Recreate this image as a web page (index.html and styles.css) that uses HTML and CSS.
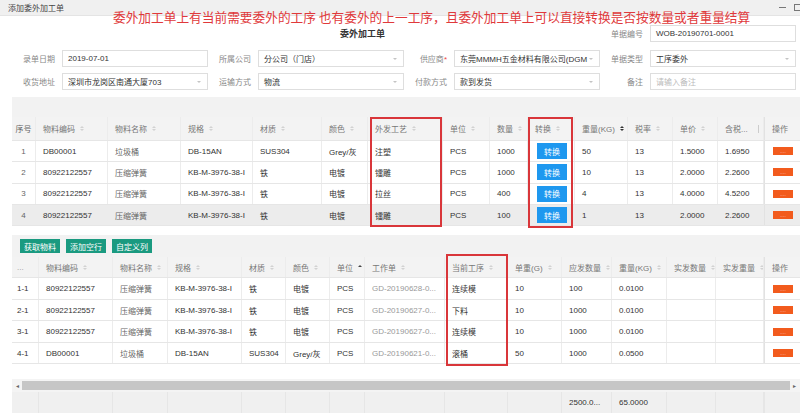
FILE: index.html
```html
<!DOCTYPE html>
<html lang="zh-CN">
<head>
<meta charset="utf-8">
<title>添加委外加工单</title>
<link rel="stylesheet" href="styles.css">
</head>
<body>
<div class="titlebar">
  <span class="wtitle">添加委外加工单</span>
  <span class="wctrls"><span class="wmin"></span><span class="wmax"></span></span>
</div>
<div class="note">委外加工单上有当前需要委外的工序 也有委外的上一工序，且委外加工单上可以直接转换是否按数量或者重量结算</div>

<div class="page">
  <div class="head-row">
    <div class="doc-title">委外加工单</div>
    <div class="field"><label>单据编号</label><div class="input">WOB-20190701-0001</div></div>
  </div>
  <div class="form">
    <div class="field"><label>录单日期</label><div class="input">2019-07-01</div></div>
    <div class="field"><label>所属公司</label><div class="input sel">分公司（门店）</div></div>
    <div class="field"><label>供应商<em>*</em></label><div class="input sel">东莞MMMH五金材料有限公司(DGM</div></div>
    <div class="field"><label>单据类型</label><div class="input sel">工序委外</div></div>
    <div class="field"><label>收货地址</label><div class="input sel">深圳市龙岗区南通大厦703</div></div>
    <div class="field"><label>运输方式</label><div class="input sel">物流</div></div>
    <div class="field"><label>付款方式</label><div class="input sel">款到发货</div></div>
    <div class="field"><label>备注</label><div class="input ph">请输入备注</div></div>
  </div>

  <div class="sec1">
    <div class="toolbar"></div>
    <div class="grid g1">
      <div class="row hd">
        <div class="c ctr">序号</div>
        <div class="c">物料编码<i class="s"></i></div>
        <div class="c">物料名称<i class="s"></i></div>
        <div class="c">规格<i class="s"></i></div>
        <div class="c">材质<i class="s"></i></div>
        <div class="c">颜色<i class="s"></i></div>
        <div class="c">外发工艺<i class="s"></i></div>
        <div class="c">单位<i class="s"></i></div>
        <div class="c">数量<i class="s"></i></div>
        <div class="c">转换<i class="s"></i></div>
        <div class="c">重量(KG)<i class="s desc"></i></div>
        <div class="c">税率<i class="s"></i></div>
        <div class="c">单价<i class="s"></i></div>
        <div class="c">含税...<span class="rz"></span></div>
        <div class="c">操作</div>
      </div>
      <div class="row">
        <div class="c ctr">1</div><div class="c">DB00001</div><div class="c lt">垃圾桶</div><div class="c">DB-15AN</div><div class="c">SUS304</div><div class="c">Grey/灰</div><div class="c">注塑</div><div class="c">PCS</div><div class="c">1000</div><div class="c"><span class="btn-blue">转换</span></div><div class="c">50</div><div class="c">13</div><div class="c">1.5000</div><div class="c">1.6950</div><div class="c"><span class="btn-or">....</span></div>
      </div>
      <div class="row">
        <div class="c ctr">2</div><div class="c">80922122557</div><div class="c lt">压缩弹簧</div><div class="c">KB-M-3976-38-I</div><div class="c">铁</div><div class="c">电镀</div><div class="c">镭雕</div><div class="c">PCS</div><div class="c">1000</div><div class="c"><span class="btn-blue">转换</span></div><div class="c">10</div><div class="c">13</div><div class="c">2.0000</div><div class="c">2.2600</div><div class="c"><span class="btn-or">....</span></div>
      </div>
      <div class="row">
        <div class="c ctr">3</div><div class="c">80922122557</div><div class="c lt">压缩弹簧</div><div class="c">KB-M-3976-38-I</div><div class="c">铁</div><div class="c">电镀</div><div class="c">拉丝</div><div class="c">PCS</div><div class="c">400</div><div class="c"><span class="btn-blue">转换</span></div><div class="c">4</div><div class="c">13</div><div class="c">4.0000</div><div class="c">4.5200</div><div class="c"><span class="btn-or">....</span></div>
      </div>
      <div class="row hl">
        <div class="c ctr">4</div><div class="c">80922122557</div><div class="c lt">压缩弹簧</div><div class="c">KB-M-3976-38-I</div><div class="c">铁</div><div class="c">电镀</div><div class="c">镭雕</div><div class="c">PCS</div><div class="c">100</div><div class="c"><span class="btn-blue">转换</span></div><div class="c">1</div><div class="c">13</div><div class="c">2.0000</div><div class="c">2.2600</div><div class="c"><span class="btn-or">....</span></div>
      </div>
    </div>
  </div>

  <div class="sec2">
    <div class="toolbar2">
      <span class="btn-g">获取物料</span><span class="btn-g">添加空行</span><span class="btn-g">自定义列</span>
    </div>
    <div class="grid g2">
      <div class="row hd">
        <div class="c mut">...</div>
        <div class="c">物料编码<i class="s"></i></div>
        <div class="c">物料名称<i class="s"></i></div>
        <div class="c">规格<i class="s"></i></div>
        <div class="c">材质<i class="s"></i></div>
        <div class="c">颜色<i class="s"></i></div>
        <div class="c">单位<i class="s asc"></i></div>
        <div class="c">工作单<i class="s"></i></div>
        <div class="c">当前工序<i class="s"></i></div>
        <div class="c">单重(G)<i class="s"></i></div>
        <div class="c">应发数量<i class="s"></i></div>
        <div class="c">重量(KG)<i class="s"></i></div>
        <div class="c">实发数量<i class="s"></i></div>
        <div class="c">实发重量<i class="s"></i></div>
        <div class="c">操作</div>
      </div>
      <div class="row">
        <div class="c">1-1</div><div class="c">80922122557</div><div class="c lt">压缩弹簧</div><div class="c">KB-M-3976-38-I</div><div class="c">铁</div><div class="c">电镀</div><div class="c">PCS</div><div class="c mut">GD-20190628-0...</div><div class="c">连续模</div><div class="c">10</div><div class="c">100</div><div class="c">0.0100</div><div class="c"></div><div class="c"></div><div class="c"><span class="btn-or">....</span></div>
      </div>
      <div class="row">
        <div class="c">2-1</div><div class="c">80922122557</div><div class="c lt">压缩弹簧</div><div class="c">KB-M-3976-38-I</div><div class="c">铁</div><div class="c">电镀</div><div class="c">PCS</div><div class="c mut">GD-20190627-0...</div><div class="c">下料</div><div class="c">10</div><div class="c">1000</div><div class="c">0.0100</div><div class="c"></div><div class="c"></div><div class="c"><span class="btn-or">....</span></div>
      </div>
      <div class="row">
        <div class="c">3-1</div><div class="c">80922122557</div><div class="c lt">压缩弹簧</div><div class="c">KB-M-3976-38-I</div><div class="c">铁</div><div class="c">电镀</div><div class="c">PCS</div><div class="c mut">GD-20190627-0...</div><div class="c">连续模</div><div class="c">10</div><div class="c">1000</div><div class="c">0.0100</div><div class="c"></div><div class="c"></div><div class="c"><span class="btn-or">....</span></div>
      </div>
      <div class="row">
        <div class="c">4-1</div><div class="c">DB00001</div><div class="c lt">垃圾桶</div><div class="c">DB-15AN</div><div class="c">SUS304</div><div class="c">Grey/灰</div><div class="c">PCS</div><div class="c mut">GD-20190621-0...</div><div class="c">滚桶</div><div class="c">50</div><div class="c">1000</div><div class="c">0.0500</div><div class="c"></div><div class="c"></div><div class="c"><span class="btn-or">....</span></div>
      </div>
      <div class="empty"></div>
      <div class="scrollbar"><span class="sa">◂</span><span class="thumb"></span><span class="sa">▸</span></div>
      <div class="row ft">
        <div class="c"></div><div class="c"></div><div class="c"></div><div class="c"></div><div class="c"></div><div class="c"></div><div class="c"></div><div class="c"></div><div class="c"></div><div class="c"></div><div class="c">2500.0...</div><div class="c">65.0000</div><div class="c"></div><div class="c"></div><div class="c"></div>
      </div>
    </div>
  </div>

  <div class="mark m1"></div>
  <div class="mark m2"></div>
  <div class="mark m3"></div>
</div>
</body>
</html>
```

FILE: styles.css
```css
* { box-sizing: border-box; }
body {
  margin: 0;
  width: 800px;
  height: 414px;
  overflow: hidden;
  position: relative;
  background: #fff;
  color: #333;
  font-family: "Liberation Sans", "Noto Sans CJK SC", sans-serif;
  font-size: 8px;
}
.titlebar {
  height: 16px;
  background: #f0f0f0;
  border-bottom: 1px solid #e4e4e4;
  display: flex;
  align-items: center;
  justify-content: space-between;
  padding-left: 8px;
}
.wtitle { color: #444; font-size: 8px; }
.wctrls { display: flex; align-items: center; gap: 8px; }
.wmin { width: 7px; height: 1px; background: #777; }
.wmax { width: 6px; height: 7px; border: 1px solid #777; border-right: 0; }

.note {
  position: absolute;
  left: 113px;
  top: 8px;
  font-family: "Noto Sans CJK SC", sans-serif;
  font-size: 12.7px;
  line-height: 18px;
  color: #e0393b;
  white-space: nowrap;
}

.page { padding-left: 12px; }

.head-row {
  margin-top: 9px;
  display: grid;
  grid-template-columns: 588px 196px;
  height: 17px;
  align-items: center;
}
.doc-title { padding-left: 328px; font-size: 9px; font-weight: bold; color: #333; }

.form {
  margin-top: 8px;
  display: grid;
  grid-template-columns: repeat(4, 196px);
  row-gap: 6px;
}
.field {
  display: grid;
  grid-template-columns: 43px 146px;
  column-gap: 7px;
  align-items: center;
  height: 17px;
}
.field label { text-align: right; color: #888; white-space: nowrap; }
.field label em { font-style: normal; color: #e44; }
.input {
  height: 17px;
  border: 1px solid #dedede;
  background: #fff;
  padding: 0 14px 0 5px;
  display: flex;
  align-items: center;
  white-space: nowrap;
  overflow: hidden;
  color: #333;
  position: relative;
}
.input.sel::after {
  content: "";
  position: absolute;
  right: 6px;
  top: 7px;
  border-left: 2px solid transparent;
  border-right: 2px solid transparent;
  border-top: 2px solid #c4c4c4;
}
.input.ph { color: #bbb; }

.sec1 { margin-top: 7px; background: #fff; padding-bottom: 9px; }
.toolbar { height: 20px; background: #f2f2f2; }

.grid { width: 788px; }
.row {
  display: grid;
  height: 21.33px;
  border-bottom: 1px solid #e6e6e6;
  background: #fff;
}
.g1 .row { grid-template-columns: 24px 72px 73px 72px 69px 46px 75px 47px 38px 47px 53px 45px 45px 46px 36px; }
.g2 .row { grid-template-columns: 27px 74px 55px 74px 44px 44px 35px 80px 63px 54px 50px 55px 49px 48px 36px; }
.g2 .row { height: 21.5px; }
.row.hd { height: 24px; background: #f3f3f3; color: #777; }
.g2 .row.hd { height: 21px; }
.row.hl { background: #ececec; }
.c {
  display: flex;
  align-items: center;
  padding-left: 7px;
  border-right: 1px solid #ececec;
  white-space: nowrap;
  overflow: hidden;
}
.c:last-child { border-right: 0; border-left: 1px solid #e2e2e2; }
.c.ctr { justify-content: center; padding-left: 0; color: #666; }
.g2 .row > .c:first-child { padding-left: 5px; }
.c.lt { color: #666; }
.c.mut { color: #999; }

.s {
  display: inline-flex;
  flex-direction: column;
  gap: 1px;
  margin-left: 5px;
}
.s::before, .s::after {
  content: "";
  border-left: 2px solid transparent;
  border-right: 2px solid transparent;
}
.s::before { border-bottom: 2px solid #d2d2d2; }
.s::after { border-top: 2px solid #d2d2d2; }
.s.desc::after { border-top-color: #333; }
.s.desc::before { border-bottom-color: #333; }
.s.asc::before { border-bottom-color: #444; }
.s.asc::after { border-top-color: transparent; }
.rz { margin-left: 10px; width: 1px; height: 8px; background: #ccc; }

.btn-blue {
  margin-left: 2px;
  width: 30px;
  height: 16px;
  background: #1e98ef;
  color: #fff;
  display: flex;
  align-items: center;
  justify-content: center;
}
.btn-or {
  margin-left: 1px;
  width: 20px;
  height: 8px;
  background: #f25b1d;
  color: #fcc;
  font-size: 5px;
  line-height: 8px;
  text-align: center;
  overflow: hidden;
}

.sec2 { background: #f2f2f2; }
.toolbar2 {
  height: 22px;
  display: flex;
  align-items: flex-start;
  gap: 6px;
  padding: 4px 0 0 8px;
}
.btn-g {
  height: 14px;
  padding: 0 4px;
  background: #1a9a80;
  color: #fff;
  display: flex;
  align-items: center;
}
.empty { height: 15px; background: #fff; }
.scrollbar {
  height: 13px;
  background: #f4f4f4;
  display: flex;
  align-items: center;
  gap: 3px;
  padding: 0 4px 0 4px;
  color: #666;
  font-size: 6px;
}
.thumb { flex: 1; height: 9px; background: #c6c6c6; }
.g2 .row.ft { height: 21px; background: #f0f0f0; border-bottom: 0; }
.row.ft .c { border-right-color: #e6e6e6; }
.row.ft .c:last-child { border-left-color: #e6e6e6; }

.mark {
  position: absolute;
  border: 2px solid #d9363a;
}
.m1 { left: 370px; top: 117px; width: 72px; height: 110px; }
.m2 { left: 528px; top: 117px; width: 45px; height: 111px; }
.m3 { left: 446px; top: 254px; width: 62px; height: 112px; }
```
